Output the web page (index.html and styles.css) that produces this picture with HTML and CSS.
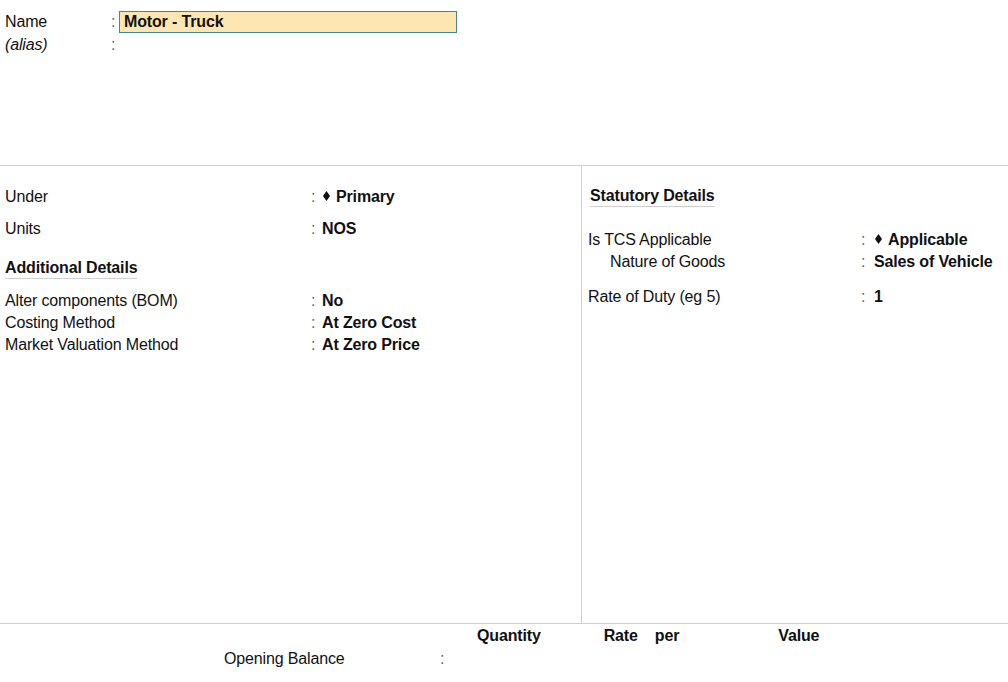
FILE: index.html
```html
<!doctype html>
<html>
    <head>
        <meta charset="utf-8" />
        <title>Stock Group Alteration</title>
        <link rel="stylesheet" href="styles.css">
    </head>
    <body>
        <div class="header">
            <div class="row">
                <span class="label name-label">Name</span>
                <span class="colon">:</span>
                <div class="name-input">Motor - Truck</div>
            </div>
            <div class="row">
                <span class="label name-label alias">(alias)</span>
                <span class="colon">:</span>
                <span class="value"></span>
            </div>
        </div>

        <div class="main">
            <div class="panel left">
                <div class="field">
                    <span class="label">Under</span>
                    <span class="colon">:</span>
                    <span class="value"><svg class="diamond" width="7" height="10" viewBox="0 0 7 10"><polygon points="3.5,0 7,5 3.5,10 0,5" /></svg>Primary</span>
                </div>
                <div class="field gap">
                    <span class="label">Units</span>
                    <span class="colon">:</span>
                    <span class="value">NOS</span>
                </div>
                <div class="section-title">
                    <span>Additional Details</span>
                </div>
                <div class="field">
                    <span class="label">Alter components (BOM)</span>
                    <span class="colon">:</span>
                    <span class="value">No</span>
                </div>
                <div class="field">
                    <span class="label">Costing Method</span>
                    <span class="colon">:</span>
                    <span class="value">At Zero Cost</span>
                </div>
                <div class="field">
                    <span class="label">Market Valuation Method</span>
                    <span class="colon">:</span>
                    <span class="value">At Zero Price</span>
                </div>
            </div>

            <div class="panel right">
                <div class="section-title">
                    <span>Statutory Details</span>
                </div>
                <div class="field gap-top">
                    <span class="label">Is TCS Applicable</span>
                    <span class="colon">:</span>
                    <span class="value"><svg class="diamond" width="7" height="10" viewBox="0 0 7 10"><polygon points="3.5,0 7,5 3.5,10 0,5" /></svg>Applicable</span>
                </div>
                <div class="field">
                    <span class="label sub">Nature of Goods</span>
                    <span class="colon">:</span>
                    <span class="value">Sales of Vehicle</span>
                </div>
                <div class="field gap-top-sm">
                    <span class="label">Rate of Duty (eg 5)</span>
                    <span class="colon">:</span>
                    <span class="value">1</span>
                </div>
            </div>
        </div>

        <div class="footer">
            <div class="footer-head">
                <span class="col-qty">Quantity</span>
                <span class="col-rate">Rate</span>
                <span class="col-per">per</span>
                <span class="col-value">Value</span>
            </div>
            <div class="footer-row">
                <span class="ob-label">Opening Balance</span>
                <span class="colon">:</span>
            </div>
        </div>
    </body>
</html>
```

FILE: styles.css
```css
body {
    font-family: "Liberation Sans", Arial, sans-serif;
    font-size: 16px;
    letter-spacing: -0.15px;
    color: #111;
    margin: 0;
    background: white;
}

.colon {
    display: inline-block;
    flex: none;
    color: #666;
    width: 11px;
}

.value {
    font-weight: bold;
}

/* Name / alias block */
.header {
    height: 165px;
    padding-top: 11px;
    box-sizing: border-box;
}

.header .row {
    display: flex;
    align-items: center;
    height: 22px;
    margin-bottom: 1px;
}

.name-label {
    width: 106px;
    padding-left: 5px;
}

.header .colon {
    width: 8px;
}

.alias {
    font-style: italic;
}

.name-input {
    width: 332px;
    height: 20px;
    line-height: 20px;
    padding-left: 4px;
    background: #fde6b0;
    border: 1px solid #3b8a96;
    font-weight: bold;
}

/* Two panels */
.main {
    display: grid;
    grid-template-columns: 582px 1fr;
    height: 457px;
    border-top: 1px solid #cfcfcf;
    border-bottom: 1px solid #cfcfcf;
}

.panel.left {
    border-right: 1px solid #cfcfcf;
    padding: 20px 0 0 5px;
}

.panel.right {
    padding: 19px 0 0 6px;
}

.field {
    display: flex;
    align-items: center;
    height: 22px;
}

.left .label {
    width: 306px;
}

.right .label {
    width: 273px;
}

.right .colon {
    width: 13px;
}

.label.sub {
    padding-left: 22px;
    width: 251px;
}

.field.gap {
    margin-top: 10px;
}

.field.gap-top {
    margin-top: 22px;
}

.field.gap-top-sm {
    margin-top: 13px;
}

.diamond {
    fill: #111;
    margin: 0 6px 4px 1px;
    vertical-align: middle;
}

.section-title {
    height: 22px;
    line-height: 22px;
    font-weight: bold;
}

.left .section-title {
    margin-top: 17px;
}

.right .section-title {
    margin-left: 2px;
}

.section-title span {
    display: inline-block;
    height: 21px;
    border-bottom: 1px solid #cfcfcf;
}

.left .section-title + .field {
    margin-top: 11px;
}

/* Opening balance footer */
.footer-head {
    display: flex;
    height: 23px;
    line-height: 23px;
    font-weight: bold;
}

.col-qty {
    margin-left: 477px;
}

.col-rate {
    margin-left: 63px;
}

.col-per {
    margin-left: 17px;
}

.col-value {
    margin-left: 99px;
}

.footer-row {
    display: flex;
    align-items: center;
    height: 23px;
}

.ob-label {
    margin-left: 224px;
    width: 216px;
}
```
